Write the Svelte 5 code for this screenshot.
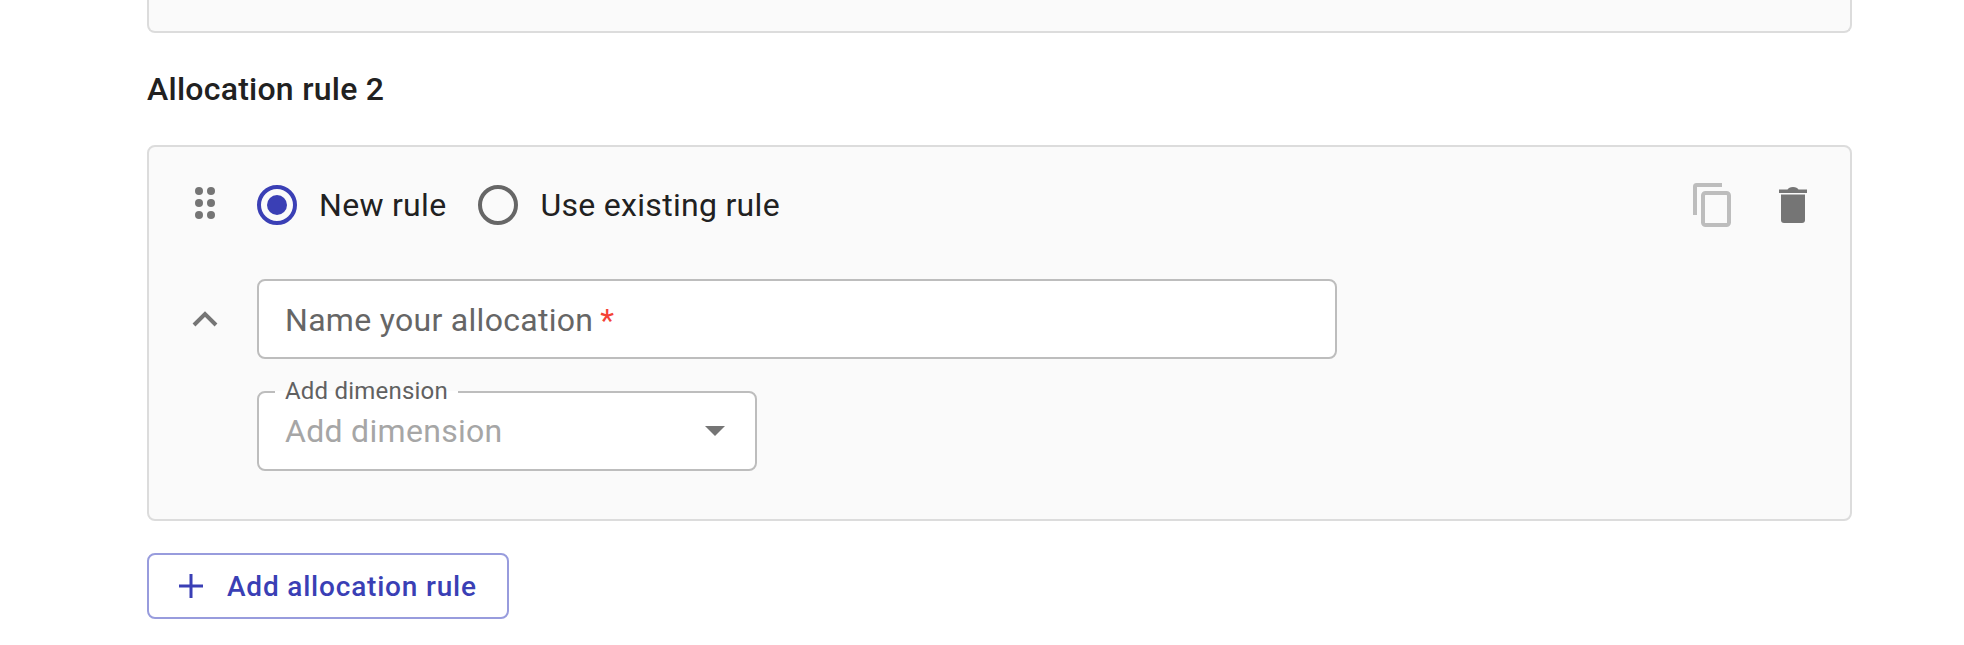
<script>
  let mode = 'new';
</script>

<div class="page">
  <div class="card prev"></div>

  <h2>Allocation rule 2</h2>

  <div class="card rule">
    <div class="top-row">
      <span class="grip">
        <svg width="20" height="32" viewBox="0 0 20 32">
          <circle cx="4" cy="4" r="4" /><circle cx="16" cy="4" r="4" />
          <circle cx="4" cy="16" r="4" /><circle cx="16" cy="16" r="4" />
          <circle cx="4" cy="28" r="4" /><circle cx="16" cy="28" r="4" />
        </svg>
      </span>

      <label class="radio">
        <input type="radio" bind:group={mode} value="new" />
        <span class="dot" class:on={mode === 'new'}></span>
        New rule
      </label>
      <label class="radio">
        <input type="radio" bind:group={mode} value="existing" />
        <span class="dot" class:on={mode === 'existing'}></span>
        Use existing rule
      </label>

      <div class="actions">
        <svg class="copy" width="38" height="44" viewBox="0 0 38 44" fill="none">
          <path d="M2 32V3.500A1.500 1.500 0 0 1 3.500 2H29" />
          <rect x="10" y="10" width="26" height="32" rx="2.500" />
        </svg>
        <svg class="trash" width="28" height="36" viewBox="0 0 28 36">
          <path d="M0 2.500h8.500C9.500 1 11 0 14 0s4.500 1 5.500 2.500H28V6H0z" />
          <path d="M2 7.500h24V33a3 3 0 0 1-3 3H5a3 3 0 0 1-3-3z" />
        </svg>
      </div>
    </div>

    <div class="name-row">
      <svg class="chevron" width="26" height="16" viewBox="0 0 26 16" fill="none">
        <path d="M2 14 13 3l11 11" />
      </svg>
      <div class="field name">
        <span>Name your allocation</span><span class="req">*</span>
      </div>
    </div>

    <div class="select">
      <span class="legend">Add dimension</span>
      <span class="placeholder">Add dimension</span>
      <span class="caret"></span>
    </div>
  </div>

  <button class="add">
    <svg width="24" height="24" viewBox="0 0 24 24"><path d="M10.500 0h3v10.500H24v3H13.500V24h-3V13.500H0v-3h10.500z" /></svg>
    Add allocation rule
  </button>
</div>

<style>
  :global(body) {
    background: #fff;
    overflow: hidden;
  }

  .page {
    width: 1705px;
    height: 645px;
    margin-left: 147px;
    display: flex;
    flex-direction: column;
    font-family: Roboto, sans-serif;
    color: #212121;
  }

  .card {
    background: #fafafa;
    border: 2px solid #dcdcdc;
    border-radius: 8px;
    box-sizing: border-box;
  }

  .prev {
    height: 33px;
    border-top: none;
    border-top-left-radius: 0;
    border-top-right-radius: 0;
    flex: none;
  }

  h2 {
    margin: 37px 0 0;
    height: 38px;
    line-height: 38px;
    font-size: 32px;
    font-weight: 500;
    letter-spacing: 0.25px;
  }

  .rule {
    margin-top: 37px;
    height: 376px;
    padding: 0 43px 0 44px;
    flex: none;
  }

  .top-row {
    display: flex;
    align-items: center;
    height: 44px;
    margin-top: 36px;
  }

  .grip {
    display: flex;
    width: 62px;
    padding-left: 2px;
    margin-top: -4px;
    flex: none;
  }

  .grip svg {
    fill: #757575;
  }

  .radio {
    display: flex;
    align-items: center;
    font-size: 32px;
    letter-spacing: 0.3px;
    margin-right: 32px;
    white-space: nowrap;
  }

  .radio input {
    display: none;
  }

  .dot {
    width: 40px;
    height: 40px;
    box-sizing: border-box;
    border: 4px solid #666;
    border-radius: 50%;
    margin-right: 22px;
    display: flex;
    align-items: center;
    justify-content: center;
    flex: none;
  }

  .dot.on {
    border-color: #3a3fb5;
  }

  .dot.on::after {
    content: '';
    width: 20px;
    height: 20px;
    border-radius: 50%;
    background: #3a3fb5;
  }

  .actions {
    margin-left: auto;
    display: flex;
    align-items: center;
    gap: 48px;
  }

  .copy path,
  .copy rect {
    stroke: #bdbdbd;
    stroke-width: 4;
  }

  .trash {
    fill: #757575;
  }

  .name-row {
    display: flex;
    align-items: center;
    margin-top: 52px;
  }

  .chevron {
    width: 26px;
    margin-right: 38px;
    margin-left: -1px;
    padding-right: 1px;
    flex: none;
  }

  .chevron path {
    stroke: #757575;
    stroke-width: 4;
  }

  .field {
    width: 1080px;
    height: 80px;
    box-sizing: border-box;
    border: 2px solid #bdbdbd;
    border-radius: 8px;
    background: #fff;
    padding: 2px 0 0 26px;
    display: flex;
    align-items: center;
    font-size: 32px;
    color: #666;
    letter-spacing: 0.3px;
  }

  .req {
    color: #f44336;
    margin-left: 7px;
  }

  .select {
    position: relative;
    width: 500px;
    height: 80px;
    margin: 32px 0 0 64px;
    box-sizing: border-box;
    border: 2px solid #bdbdbd;
    border-radius: 8px;
    background: #fff;
    padding: 0 30px 0 26px;
    display: flex;
    align-items: center;
    justify-content: space-between;
  }

  .legend {
    position: absolute;
    left: 16px;
    top: -14px;
    padding: 0 10px;
    height: 24px;
    line-height: 24px;
    font-size: 24px;
    letter-spacing: 0.2px;
    color: #616161;
    background: linear-gradient(#fafafa 50%, #fff 50%);
  }

  .placeholder {
    font-size: 32px;
    color: #a6a6a6;
    letter-spacing: 0.3px;
  }

  .caret {
    width: 0;
    height: 0;
    border-left: 10px solid transparent;
    border-right: 10px solid transparent;
    border-top: 10px solid #757575;
  }

  .add {
    margin-top: 32px;
    width: 362px;
    height: 66px;
    box-sizing: border-box;
    border: 2px solid #989cdd;
    border-radius: 8px;
    background: #fff;
    color: #3a3fb5;
    font-family: inherit;
    font-size: 28px;
    font-weight: 500;
    letter-spacing: 0.8px;
    display: flex;
    align-items: center;
    gap: 24px;
    padding: 0 0 0 30px;
    white-space: nowrap;
  }

  .add svg {
    fill: #3a3fb5;
    flex: none;
  }
</style>
